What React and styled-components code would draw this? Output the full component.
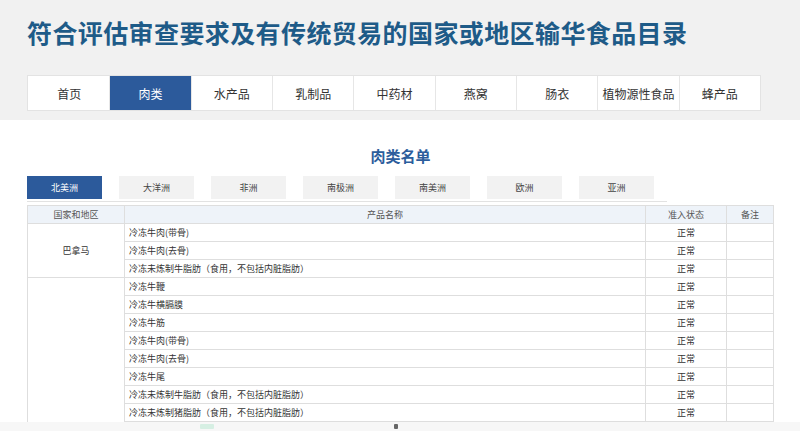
import React from 'react';
import styled, { createGlobalStyle } from 'styled-components';

const GlobalStyle = createGlobalStyle`
    html, body {
        margin: 0;
        padding: 0;
        background: #ffffff;
    }
    body {
        font-family: "Noto Sans CJK SC", "Noto Sans", sans-serif;
        color: #333;
    }
`

const StyledPage = styled.div`
    width: 800px;
    height: 431px;
    display: flex;
    flex-direction: column;
    overflow: hidden;
`

const StyledHeader = styled.div`
    background: #f1f1f1;
    padding: 17px 39px 9px 27px;
    flex-shrink: 0;
`

const StyledTitle = styled.h1`
    margin: 0;
    font-size: 25px;
    line-height: 30px;
    font-weight: 700;
    letter-spacing: 0.4px;
    color: #1e5b88;
    white-space: nowrap;
`

const StyledNav = styled.ul`
    margin: 28px 0 0;
    padding: 0;
    list-style: none;
    display: grid;
    grid-template-columns: repeat(9, 1fr);
    height: 36px;
    background: #fff;
    border: 1px solid #e3e3e3;
    box-sizing: border-box;
`

const StyledNavItem = styled.li`
    display: flex;
    align-items: center;
    justify-content: center;
    font-size: 12px;
    color: ${props => (props.active ? '#fff' : '#333')};
    background: ${props => (props.active ? '#2c5a9b' : '#fff')};
    border-left: 1px solid ${props => (props.first ? 'transparent' : '#e6e6e6')};
    white-space: nowrap;
`

const StyledContent = styled.div`
    flex: 1;
    min-height: 0;
    background: #fff;
    padding: 0 26px 0 27px;
    display: flex;
    flex-direction: column;
    overflow: hidden;
`

const StyledListTitle = styled.h2`
    margin: 26px 0 0;
    font-size: 15px;
    line-height: 20px;
    font-weight: 700;
    color: #2c5d9c;
    text-align: center;
`

const StyledTabs = styled.div`
    margin-top: 10px;
    width: 640px;
    display: flex;
    gap: 17px;
    padding-bottom: 2px;
    border-bottom: 1px solid #e2e2e2;
`

const StyledTab = styled.div`
    width: 75px;
    height: 23px;
    display: flex;
    align-items: center;
    justify-content: center;
    font-size: 9px;
    color: ${props => (props.active ? '#fff' : '#444')};
    background: ${props => (props.active ? '#2c5a9b' : '#f2f2f2')};
`

const StyledTableWrap = styled.div`
    margin-top: 3px;
    flex: 1;
    min-height: 0;
    overflow: hidden;
`

const StyledTable = styled.table`
    width: 100%;
    border-collapse: collapse;
    table-layout: fixed;
    font-size: 9px;
    color: #333;

    th, td {
        border: 1px solid #dedede;
        height: 17px;
        padding: 0;
        line-height: 17px;
        white-space: nowrap;
        overflow: hidden;
    }
    th {
        background: #eef3f9;
        font-weight: 400;
        color: #555;
        text-align: center;
    }
`

const StyledCell = styled.td`
    text-align: ${props => props.align || 'center'};
    padding-left: ${props => (props.align === 'left' ? '4px' : '0')} !important;
    vertical-align: middle;
`

const StyledBottomBar = styled.div`
    height: 9px;
    flex-shrink: 0;
    background: #f7f7f7;
    display: flex;
    align-items: center;
    padding-left: 200px;
    gap: 180px;
`

const StyledDot = styled.span`
    width: ${props => props.w}px;
    height: 5px;
    background: ${props => props.color};
    border-radius: 1px;
`

const navItems = ['首页', '肉类', '水产品', '乳制品', '中药材', '燕窝', '肠衣', '植物源性食品', '蜂产品']
const regions = ['北美洲', '大洋洲', '非洲', '南极洲', '南美洲', '欧洲', '亚洲']

const countries = [
    {
        name: '巴拿马',
        products: ['冷冻牛肉(带骨)', '冷冻牛肉(去骨)', '冷冻未炼制牛脂肪（食用，不包括内脏脂肪）'],
    },
    {
        name: '加拿大',
        products: [
            '冷冻牛鞭', '冷冻牛横膈膜', '冷冻牛筋', '冷冻牛肉(带骨)', '冷冻牛肉(去骨)', '冷冻牛尾',
            '冷冻未炼制牛脂肪（食用，不包括内脏脂肪）', '冷冻未炼制猪脂肪（食用，不包括内脏脂肪）',
            '冷冻牛肉(带骨)', '冷冻牛肉(去骨)', '冷冻猪肉(带骨)', '冷冻猪肉(去骨)', '冷冻猪蹄',
            '冷冻猪耳', '冷冻猪尾', '冷冻猪肚', '冷冻猪心', '冷冻猪肝', '冷冻猪肾', '冷冻猪舌',
        ],
    },
]

const App = () => {
    return (
        <StyledPage>
            <GlobalStyle />
            <StyledHeader>
                <StyledTitle>符合评估审查要求及有传统贸易的国家或地区输华食品目录</StyledTitle>
                <StyledNav>
                    {navItems.map((item, i) => (
                        <StyledNavItem key={item} active={i === 1} first={i === 0}>{item}</StyledNavItem>
                    ))}
                </StyledNav>
            </StyledHeader>
            <StyledContent>
                <StyledListTitle>肉类名单</StyledListTitle>
                <StyledTabs>
                    {regions.map((r, i) => (
                        <StyledTab key={r} active={i === 0}>{r}</StyledTab>
                    ))}
                </StyledTabs>
                <StyledTableWrap>
                    <StyledTable>
                        <colgroup>
                            <col style={{ width: 97 }} />
                            <col />
                            <col style={{ width: 81 }} />
                            <col style={{ width: 47 }} />
                        </colgroup>
                        <thead>
                            <tr>
                                <th>国家和地区</th>
                                <th>产品名称</th>
                                <th>准入状态</th>
                                <th>备注</th>
                            </tr>
                        </thead>
                        <tbody>
                            {countries.map(c =>
                                c.products.map((p, i) => (
                                    <tr key={c.name + i}>
                                        {i === 0 ? <StyledCell rowSpan={c.products.length}>{c.name}</StyledCell> : null}
                                        <StyledCell align="left">{p}</StyledCell>
                                        <StyledCell>正常</StyledCell>
                                        <StyledCell></StyledCell>
                                    </tr>
                                ))
                            )}
                        </tbody>
                    </StyledTable>
                </StyledTableWrap>
            </StyledContent>
            <StyledBottomBar>
                <StyledDot w={14} color="#d6efe3" />
                <StyledDot w={4} color="#666" />
            </StyledBottomBar>
        </StyledPage>
    )
}

export default App;
